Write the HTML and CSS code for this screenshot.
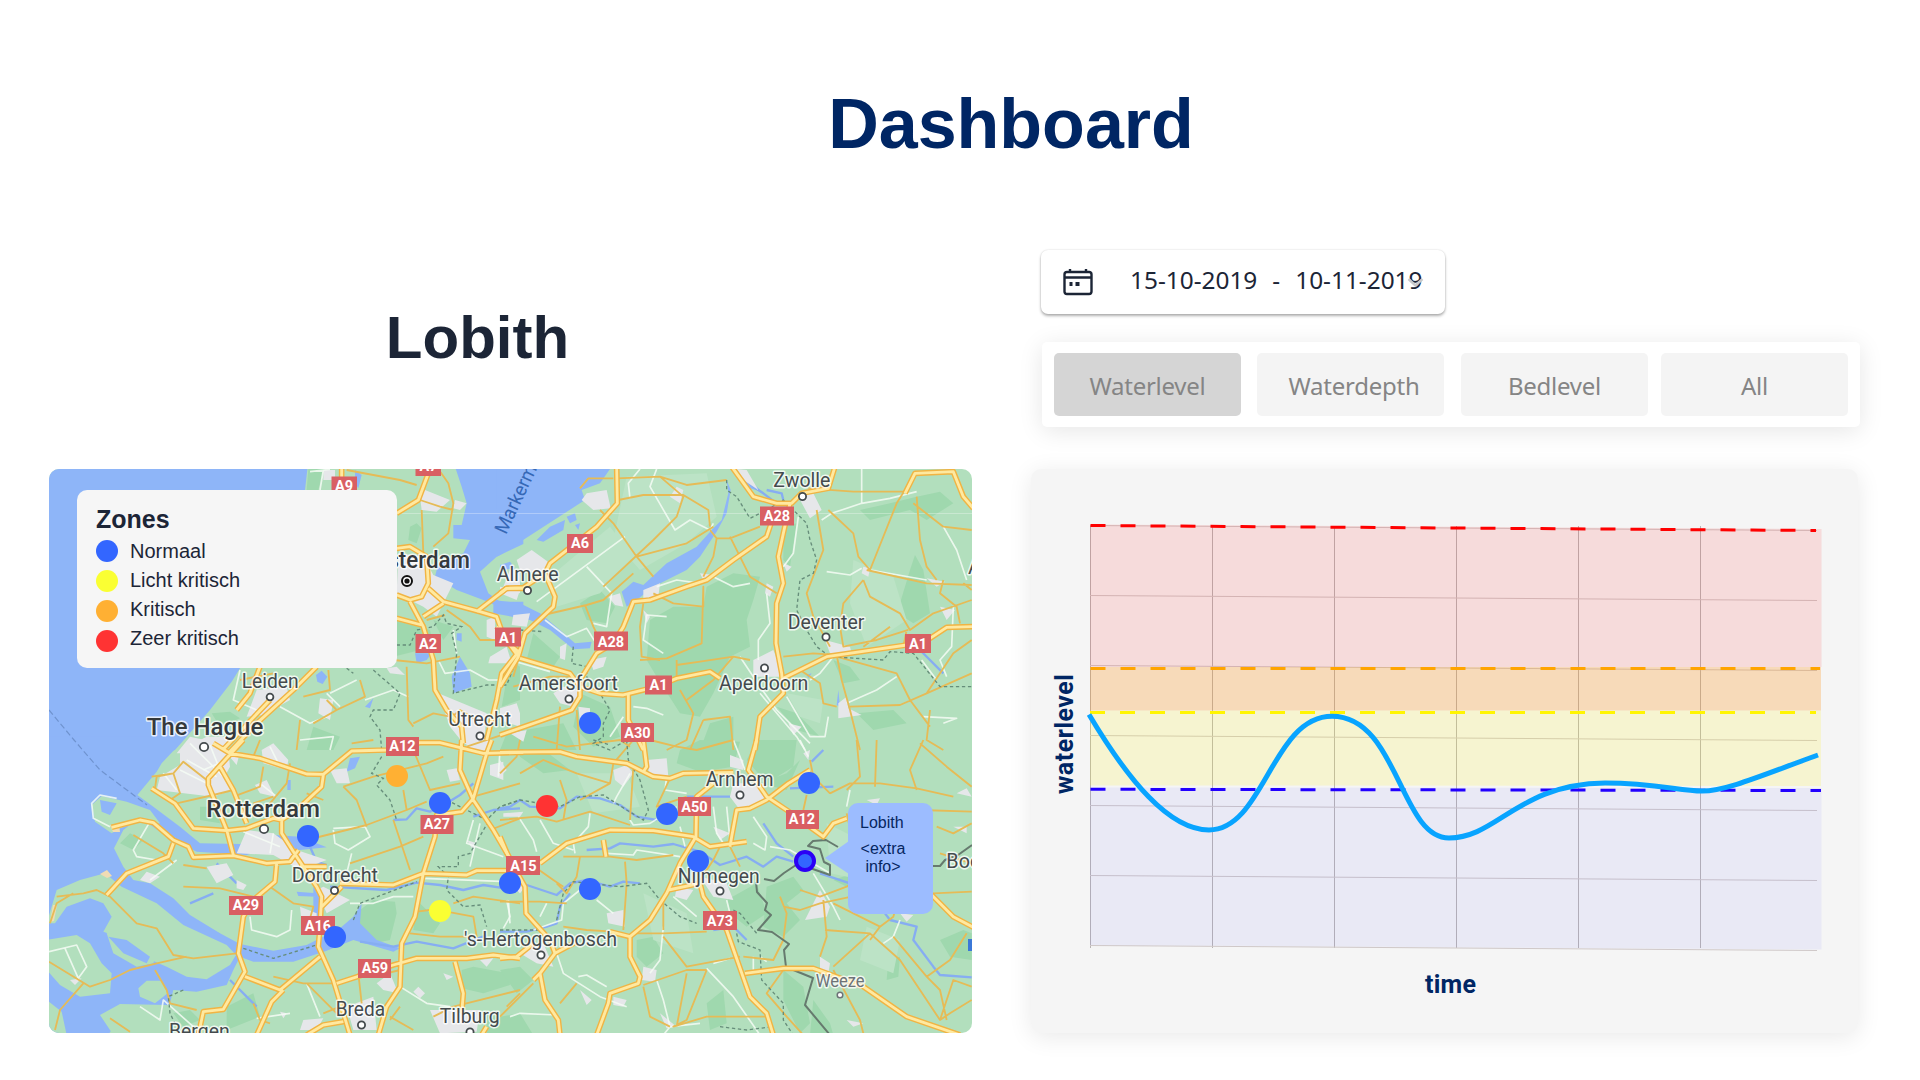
FILE: index.html
```html
<!DOCTYPE html>
<html lang="nl">
<head>
<meta charset="utf-8">
<title>Dashboard</title>
<link rel="stylesheet" href="styles.css">
</head>
<body>
<h1 class="title">Dashboard</h1>
<main class="columns">
  <section class="location">
    <h2 class="location-name">Lobith</h2>
    <div class="map">
      <svg class="map-canvas" viewBox="49 469 923 564" width="923" height="564">
        <defs>
          <g id="motorways">
            <g transform="translate(40 460) scale(.33333)">
              <path d="M905 20V60M1165 40L1135 120L1070 160M1070 265L1110 260L1160 290L1165 370L1145 410L1110 420L1070 405M1165 385L1210 425L1320 455L1370 470L1395 540L1440 580M1310 455L1400 385H1450M1110 425L1150 500L1180 600L1185 690L1220 750L1265 800L1270 850M1070 475L1145 495M1150 470L1210 430M1440 570L1385 640L1370 720L1340 840M830 620L760 690L650 790L565 880M660 620L630 700L590 750"/>
            </g>
            <g transform="translate(500 460) scale(.33333)">
              <path d="M350 20L352 130L290 200L150 310L135 340L165 410L160 440L75 520L55 590L0 680M0 400L20 385L70 383L135 340M695 20L760 110L830 130H875L905 100L985 85L1005 20M870 130L850 220L835 290L850 370L830 430L828 550L845 640L850 700L780 770L765 870M820 170L800 230L700 300L620 360L560 380L450 420L400 425L370 500L340 550L290 580L240 660V710L215 750L130 780L0 825M-10 500L55 590M60 595L210 640L240 680L300 700L370 705L470 680L530 655L630 635L660 655M850 655L980 590L1220 555L1290 535L1340 502L1420 500M385 700V780L430 870M1215 100L1245 40L1360 35L1390 110L1420 145"/>
            </g>
            <g transform="translate(40 740) scale(.33333)">
              <path d="M520 10L570 40L660 55L800 102L850 103L935 33L1040 30L1140 8H1200L1330 40L1450 37M610 0L505 115V135L560 270L580 345M540 80L580 150L620 250M215 262L300 240L340 248L400 300L445 320L460 352L580 347L680 370L750 365L775 330M335 145L405 190L460 265L560 272L620 265L700 235L725 240V280L770 350L830 440L845 470L840 560L835 620L880 720L930 885M850 105L845 140L770 210L725 240M710 370L705 425L640 480L610 530L595 640L615 695L550 808L490 815L475 885M615 710L720 750L840 650M730 750L695 785L650 885M780 380H860M900 430L1060 435L1150 400L1280 405L1310 392H1430M1355 0L1340 40L1300 175L1265 215L1190 225L1185 290L1150 400L1125 530L1085 610L1080 740L1040 800L1015 885M1265 0L1260 90L1300 180L1360 270L1430 390M890 730L1060 675L1130 655H1280L1360 645L1440 655M1245 665L1270 760L1265 820M1340 860L1325 885M400 310L385 350L260 400L200 465M910 845L850 855L800 885M845 500L905 440M550 28L690 -120"/>
            </g>
            <g transform="translate(500 740) scale(.33333)">
              <path d="M0 37L180 35L230 50L380 70L460 110L510 115L550 100L700 97M430 0L440 80L430 95M770 0L745 90L800 170L860 210L970 290L1000 250L1040 235M930 90L865 130L800 180L750 205L710 210L695 290L690 320M640 130L590 170L588 290L540 370L500 460L450 540L390 590V650L420 710L415 730L330 760L325 790L290 885M120 370L200 310L330 270L460 272L580 290L630 320L740 305M310 300L318 350M0 290L30 360L75 440L78 520L150 600L165 640L120 700L135 780L175 840L180 885M165 640L230 605M0 655L50 650L100 610M600 430L610 470L680 570L750 770L800 820L820 885M735 700L850 685H940L1090 740L1220 830L1380 885M1290 460L1360 530L1420 562M505 450L600 430M330 575L390 590M120 700L100 720"/>
            </g>
          </g>
        </defs>

        <rect class="land" x="49" y="469" width="923" height="564"/>

        <!-- woods -->
        <g class="wood" transform="translate(40 460) scale(.33333)">
          <path d="M1110 200L1130 190L1145 205L1130 250L1105 240ZM800 90L805 27L850 27L835 90ZM1060 480L1170 510L1180 560L1060 590ZM1410 600L1440 620V720L1385 740ZM820 800L900 830L880 870H800ZM1180 480L1240 500L1210 540ZM515 760L570 755L600 775L540 800Z"/>
        </g>
        <g class="wood" transform="translate(500 460) scale(.33333)">
          <path d="M620 380L700 340L780 350L760 420L740 480L750 560L690 590L640 700L600 770L540 760L470 650L440 600L450 480L520 440L610 440ZM1200 430L1230 330L1245 285L1270 330L1290 460L1240 490L1210 470ZM1080 150L1170 130L1250 110L1320 95L1360 130L1280 180L1230 150L1110 180ZM630 790L700 770V870H600ZM240 430L300 390L345 440L320 490L260 480ZM850 200L890 190L870 320L850 300ZM240 700L330 740L360 830L280 860L220 800ZM100 520L180 590L160 620L80 600ZM1070 760L1180 750L1220 790L1120 810ZM1000 600L1050 620L1080 660L1030 670ZM20 820L190 790L230 870H0ZM830 740L890 760L960 830L890 810Z"/>
        </g>
        <g class="wood" transform="translate(40 740) scale(.33333)">
          <path d="M960 510L1000 480L1065 485L1070 520L1050 600L1000 610L950 560ZM1265 690L1300 680L1405 700L1410 735L1330 760L1265 745ZM460 570L480 555L540 580L530 600ZM240 310L270 280L310 300L280 330ZM1340 820L1440 850V885H1340ZM400 820L450 810L480 840L430 860ZM480 200L530 200L540 250L480 240ZM1130 480L1200 550L1180 580L1120 570ZM560 800L640 760L660 830L560 870Z"/>
        </g>
        <g class="wood" transform="translate(500 740) scale(.33333)">
          <path d="M540 30L600 0L720 5L700 80L600 95L530 70ZM740 60L770 0H890L880 80L800 130ZM800 440L880 410L910 450L860 490L900 540L850 590L790 560ZM680 480L770 430L800 520L740 560L690 520ZM620 790L670 750L680 850L630 870ZM850 690L910 740L930 850L900 880L850 780ZM1320 600L1390 570L1415 580V660L1350 650ZM1165 660L1200 650L1195 710L1160 720ZM50 0L120 20L210 90L130 100L60 50ZM410 600L460 590L490 640L440 680L410 650ZM0 690L60 680L100 720L50 760ZM0 830L60 820L100 885H0ZM780 130L860 100L900 60L860 150ZM1000 420L1060 400L1100 430L1040 440ZM940 780L990 850L1000 885H930Z"/>
        </g>
        <g class="pale" transform="translate(500 460) scale(.33333)">
          <path d="M380 50L620 40L650 170L560 250L420 330L340 240ZM150 350L330 200L400 290L300 400L170 440ZM1060 300L1180 350L1220 480L1100 560L1050 430ZM860 700L970 720L960 790L900 770Z"/>
        </g>
        <g class="pale" transform="translate(500 740) scale(.33333)">
          <path d="M230 100L380 100L420 200L280 220ZM980 250L1080 300L1090 420L990 400ZM430 460L560 520L580 640L460 600ZM1100 560L1200 600L1180 700L1080 660Z"/>
        </g>

        <!-- sea, lakes and rivers -->
        <g class="water">
          <g transform="translate(40 460) scale(.33333)">
            <path d="M20 20H803L795 90V500L600 625L575 665L510 750L405 870L300 900H20ZM1245 20H1450V252L1370 290L1320 335L1345 400L1380 425H1450V470L1400 450L1330 420L1250 390L1185 350L1195 310L1270 280L1290 240L1240 235V195H1265L1280 130L1265 80ZM1235 650L1260 590L1290 640L1295 680L1240 700ZM1250 520L1265 520L1265 545L1250 540ZM828 645L845 632L862 650L848 672L832 665ZM1125 580H1175L1160 600L1130 610ZM975 740L1000 715L990 745ZM945 30L965 45L955 85L945 70Z"/>
          </g>
          <g transform="translate(500 460) scale(.33333)">
            <path d="M-10 20H335L300 70L245 90L255 120L0 285L-10 290ZM-20 420L60 430L120 460L180 510L225 550L275 545L270 565L220 568L150 510L90 480L-20 460ZM430 375L500 310L590 260L640 205L665 180L685 100L680 60L692 90L680 160L650 215L600 290L560 330L460 380L410 420L380 440L365 395L400 365ZM150 200L195 180L190 210L130 245L110 240ZM715 40L750 60L785 95L750 85ZM200 170L225 160L230 180L210 190ZM0 315L30 305L45 325L0 330ZM225 195L240 190L235 210ZM1015 690L1020 740L1010 735ZM920 645L935 640L925 655Z"/>
          </g>
          <g transform="translate(40 740) scale(.33333)">
            <path d="M20 -10H440L365 70L350 95L292 165L340 200L420 260L480 310L600 312L700 285L780 290L860 322L780 330L700 320L620 345L470 335L380 290L300 232L250 270L222 325L250 380L280 420L330 430L400 475L450 525L540 580L600 612L700 632L800 615L900 565L940 530L965 490L960 550L1010 600L1080 625L1060 635L940 600L860 632L760 665L640 665L600 650L580 690L560 735L470 755L400 750L390 790L330 830L230 850L200 890H20ZM930 55L960 50L945 85L920 95ZM820 440H838V540L820 530ZM770 455L830 460V470L775 468ZM742 120H752V150H742Z"/>
          </g>
        </g>
        <g class="river">
          <g transform="translate(40 740) scale(.33333)">
            <path d="M870 440L1040 450L1130 428L1200 435L1270 450L1330 435L1440 452M960 605L1060 620L1130 605L1240 625L1340 585M1060 240L1100 238L1130 205L1170 215L1220 190L1260 165L1300 130M1300 230L1360 210L1440 205M530 370L590 430M450 490L520 460M570 720L650 800M810 320L830 365L860 375"/>
          </g>
          <g transform="translate(500 740) scale(.33333)">
            <path d="M0 205L30 200L60 180L90 200L180 205L230 170L300 175L360 195L410 230L470 240M260 330L330 325L360 310L460 320L520 312L600 335L660 375L740 350L790 380L830 350L880 365M0 440L80 435L170 465L210 430L260 420L330 440L370 425L420 430M0 575L80 575L140 560L170 550L180 500L210 460M960 400L1050 430L1140 500L1170 540L1250 560L1240 600L1300 680L1320 705L1415 712M790 250L830 310L880 350M870 145L1000 140M935 65L970 30M640 570L700 560L740 600M560 170L690 170"/>
          </g>
          <g transform="translate(500 460) scale(.33333)">
            <path d="M700 27L760 80L790 100L830 130M800 90L845 100L850 120M1260 570L1330 640"/>
          </g>
        </g>

        <!-- delta islands -->
        <g class="land" transform="translate(40 740) scale(.33333)">
          <path d="M20 550L50 450L120 420L195 400L245 440L350 490L430 555L560 615L588 645L570 675L500 718L440 710L380 680L345 665L300 640L260 600L190 575L215 530L190 490L150 475L80 500L45 550ZM20 600L110 585L150 610L185 670L215 700L210 760L120 770L60 735L20 690ZM295 745L320 722L365 722L383 760L345 790L300 770ZM20 780L65 815L80 885H20ZM180 825L240 792L380 795L400 885H220ZM155 195L185 168L260 185L330 210L360 250L300 245L240 265L215 280L165 245ZM200 580H280L350 640L340 670L290 680L220 640Z"/>
        </g>
        <g class="water" transform="translate(40 740) scale(.33333)"><path d="M180 180L230 190L210 225L185 215ZM205 590L260 600L330 650L320 670L250 640Z"/></g>
        <path class="sand" d="M100 874L107 870L112 876L107 878ZM110 825L119 825L120 832L113 832ZM50 922L53 905L57 905L54 921Z"/>

        <!-- built-up areas -->
        <g class="urban">
          <g transform="translate(40 460) scale(.33333)">
            <path d="M1140 110L1155 90L1230 120L1190 155L1145 150ZM1245 120L1280 130L1260 150L1240 145ZM1075 280L1150 290L1180 345L1240 370L1190 470L1150 440L1070 400ZM850 30L885 30V60L850 60ZM840 715L880 720L870 780L835 760ZM1350 590L1400 560L1415 610L1345 610ZM650 690L740 680L750 720L670 765L620 770ZM450 830L540 850L540 880H410ZM1195 700L1340 760L1330 870L1270 850L1230 800ZM1380 780L1430 730L1440 760V800ZM1040 625L1070 620L1095 645L1050 640ZM1410 330H1440V400L1390 380Z"/>
            <path d="M830 210L890 190L900 260H840ZM1340 480L1365 470V540L1340 530Z"/>
          </g>
          <g transform="translate(500 460) scale(.33333)">
            <path d="M260 100L320 90L332 145L280 150L245 120ZM50 300L95 270L150 310L120 340L60 330ZM530 80L550 90L540 130L510 110ZM895 110L940 100L965 150L930 175ZM760 600L820 570L840 620L840 650L760 650ZM430 390L480 370L475 410L430 415ZM325 410L360 400L370 440L345 435ZM1280 355L1335 365L1310 380ZM1320 440L1365 450L1340 480ZM975 540L1050 560L1055 580L990 580ZM1015 730L1040 710L1045 745L1085 765L1015 775ZM160 700L190 680L240 690L220 740L180 730ZM235 740L270 745V800L240 790ZM600 340L640 345L610 360ZM800 370L820 380L810 410L795 400ZM270 600L320 590L310 620L280 630ZM30 820L80 810L70 845ZM430 450L450 470L440 490ZM850 310L875 320L860 335ZM1090 320L1110 325L1105 350L1085 340ZM865 790L905 800L880 825ZM180 560L200 550L195 600L180 595ZM0 380L60 390L50 420L0 400ZM40 465L90 460L80 500L35 495ZM710 27L740 30L775 90L730 60ZM0 745L50 730L40 770L0 790Z"/>
          </g>
          <g transform="translate(40 740) scale(.33333)">
            <path d="M420 30L500 -10H560L570 80L520 170L350 150L360 110L420 75ZM555 85L575 150L520 170L510 130ZM665 30L700 10L745 60L740 90L670 70ZM645 135L680 120L705 170L660 160ZM870 90L920 85L930 130L890 130ZM620 270L700 280L770 330L860 360L780 390L700 345L590 340ZM500 380L560 370L580 405L530 430ZM590 420L620 435L610 450L590 445ZM850 440L930 480L860 520L830 450ZM920 800L1000 770L1010 870H940ZM1010 730L1050 700L1075 760L1030 750ZM1120 755L1135 740L1155 760L1140 775ZM1170 810L1320 810L1310 875L1200 880ZM1220 90L1250 85L1260 120L1230 125ZM1350 75L1390 65V120L1350 105ZM300 420L320 395L360 410L330 430ZM1280 300L1310 310L1300 330ZM560 40L600 35L590 75ZM1280 -10H1350L1330 50L1280 20ZM1320 660L1360 655L1340 680ZM1210 700L1240 710L1220 720ZM790 840L850 835L830 870H780ZM720 815L740 820L730 835ZM90 720L125 715L105 735ZM780 500L830 520V550H785Z"/>
          </g>
          <g transform="translate(500 740) scale(.33333)">
            <path d="M340 90L380 75L400 100L370 140L345 120ZM440 60L500 55L505 110L450 115ZM700 130L790 130L800 180L720 210L690 170ZM640 260L690 280L660 300ZM600 410L680 430L700 480L640 470ZM530 440L580 450L560 480L525 470ZM320 520L370 510L375 560L325 550ZM60 640L130 610L160 680L110 670ZM430 680L470 690L465 725L425 720ZM340 770L380 780L370 800L340 795ZM960 450L990 500L980 530L915 540ZM960 650L990 670L985 700L960 685ZM1040 840L1090 850L1060 860ZM910 40L930 30L925 60ZM1370 160L1400 145L1415 170ZM1200 520L1240 525L1220 545ZM10 220L70 215L60 230H10ZM30 430L80 435L60 460ZM0 60L20 90L0 110ZM240 750L275 780L260 795ZM1360 260L1400 260V280ZM690 45L730 60V90L690 80ZM480 820L530 860L500 865ZM1100 180L1140 175L1130 195Z"/>
          </g>
        </g>

        <!-- local roads -->
        <g class="local">
          <g transform="translate(40 460) scale(.33333)">
            <path d="M810 35L870 28M850 30L840 90M600 630L580 720L650 750M870 700L950 660M860 700L900 740M975 720L1060 690L1105 710M1195 600L1215 640L1290 630L1345 660L1400 660M720 740L810 790L860 770M780 840L880 830L870 870M1240 510L1250 580"/>
          </g>
          <g transform="translate(500 460) scale(.33333)">
            <path d="M470 27L450 80L525 210L570 180L630 210L640 190M420 27L385 70L390 115M1085 27V130L995 160L965 180M1085 130L1170 115L1250 95M375 230L110 425M260 320L335 400L320 500L280 490M980 335L1050 345L1085 325M895 170L880 280L850 320M600 370L530 360L470 380M640 350L700 380L750 370M500 470L440 465L430 540L490 580M135 480L200 530L260 505L285 545M1330 200L1370 270L1400 360M720 590L780 680L830 750L880 800L930 850M780 700L890 830L915 870M860 710L930 830L975 830L985 770M1040 730L1130 690L1190 650M1265 600L1310 660M1270 770L1370 775L1330 790M400 740L440 745L490 765M1110 330L1280 360M1360 440L1355 560L1320 600L1340 650M800 400L810 490L775 540V600M930 660L960 640L1000 590M30 600L150 635M370 770L330 830"/>
          </g>
          <g transform="translate(40 740) scale(.33333)">
            <path d="M230 175L180 165L155 190L160 235L210 260M330 245L280 330L290 350L350 360M410 360L330 420M630 530L635 570L710 590L750 570L755 510M930 490L1000 490L1060 470L1120 470M880 270L885 310L925 330L990 290L975 260L880 265M935 340L920 400M1300 240L1280 310L1390 350M1320 250L1290 380M1400 480L1410 530L1390 565M27 635L110 615L140 680L115 715L75 625M300 800L360 840L370 780L460 860M1080 740L1160 790L1230 800M650 835L750 820M800 730L840 830M1150 415L1400 425M490 90L560 60M370 100L410 150M450 10L560 120M510 15L540 90"/>
            <path d="M440 60L530 110M420 90L500 130M660 130L710 170M610 275L720 320M700 280L690 340M690 20L720 80M1380 30L1375 110"/>
          </g>
          <g transform="translate(500 740) scale(.33333)">
            <path d="M390 100L350 170L340 190M500 110L495 150L560 160M270 220L265 260L220 310L225 340M55 230L100 300L110 335M120 240L160 310L220 330M390 240L400 255L450 250L530 200M540 260L555 320M700 0L720 50L735 90M900 0L925 50M1050 150L1040 200M640 200L650 280L670 310M680 200L690 300M760 230L800 290L795 330L760 310M810 320L870 330L990 400M320 340L400 345L410 330L540 350M290 480L340 520M240 450L190 490L185 540L100 570M140 490L120 530M490 560L480 660L450 700M170 640L190 700L300 770L380 800M235 710L260 705L320 740M470 720L490 780L510 860L490 885M620 685L700 770L780 885M680 480L690 520M30 830L60 820L170 825M520 470L590 530M940 400L1000 500L1020 540M510 860L600 850M1200 540L1180 590L1150 610M760 650V690M640 670L690 655M780 650L800 665M25 480L30 550"/>
          </g>
        </g>
        <path class="seam" d="M388 513.500H972"/>

        <!-- secondary roads -->
        <g class="secondary">
          <g transform="translate(40 460) scale(.33333)">
            <path d="M920 30L1080 60L1130 75M1195 27L1225 70L1240 130L1225 220L1180 260M1140 120L1200 140L1240 150M1145 150L1150 280M1220 450L1290 500L1320 540L1380 540M865 630L870 690L790 710M960 660L975 710L890 750L860 720M820 790L890 750M1100 620L1105 780L1120 800M1060 600L1160 610L1260 590M1120 790L1180 760L1230 770M780 780L770 870M1225 780L1260 750L1310 780M600 660L700 640M1280 860L1400 820M935 850L1000 840M1215 465L1160 480"/>
          </g>
          <g transform="translate(500 460) scale(.33333)">
            <path d="M240 85L265 55H340M350 55L480 50L560 75L680 60M355 120L430 105H550L625 150L630 200M480 50L550 110L530 170L460 240L310 380M300 150L340 190L410 290L460 350M410 290L560 250L640 200M130 465L260 435L310 420L400 340M255 435L280 500L310 560M690 230L750 350L830 400M650 235L640 290L610 350M780 200L690 235H650L630 210M460 400L520 430L610 440V380L605 550L500 595L420 600M530 615L600 605L700 590L750 600M430 430L420 500L425 590L480 600M950 150L970 270L920 400L940 470L990 560M985 150L1060 220L1075 290L1110 330L1190 130L1215 90M1100 330L1280 370L1415 375M1250 110L1260 240L1280 320L1310 360M1090 360L1030 430L1020 500L1030 560L1130 540L1225 510M1090 360L1110 410L1200 460L1230 510L1300 460L1415 420M1240 130L1330 200L1415 210M1330 360L1320 400L1370 440L1380 490M850 590L940 580L1010 585L1025 660L1050 750L1080 870M1010 590L1190 640L1230 720L1290 800M1050 740L1200 735L1280 700L1415 640M1280 700L1360 580L1415 540M900 630L960 670L970 730L1010 740M610 780L690 770L700 870M610 780L570 870M540 690L580 760L560 840L500 870M40 680L150 650L210 650M60 580L40 650M180 740L170 870M230 750L240 870M100 830L200 860L360 840L390 860M925 85L1060 95L1220 95M1220 510L1210 560M1290 750L1280 840L1330 870M1390 370L1415 390M530 600V650M1090 560L1170 500M700 590L640 660L560 720"/>
          </g>
          <g transform="translate(40 740) scale(.33333)">
            <path d="M335 110L400 100L420 160L390 180M345 145L350 110L400 100L430 65L500 120M410 190L520 165L580 150M670 80L660 140L580 170M750 70L740 130L690 190L640 230M850 180L800 160M660 0L640 50M910 140L1000 110L1040 100L1160 70L1210 50M910 140L950 180L980 260M800 300L860 285L980 255L1100 210L1160 185M1120 30L1170 150L1260 130M1060 240L1080 300L1110 390M930 370L1080 320L1150 290M430 375L500 385M430 440L540 445L640 470M690 440L760 490L820 500L800 570M50 470L130 460L170 450L210 470L290 550L350 565L400 645L460 655L590 640M30 550L50 490L100 460M27 665L150 740L210 720L270 690L350 670L440 650M130 730L60 810L45 870M345 690L380 750L390 790L470 810M1130 515L1170 510M1220 515L1300 530L1310 590L1200 590L1110 580M1240 490L1300 470L1440 490M700 710L790 730L880 730M800 730L860 790L900 830M640 790L660 840L690 850M955 700L965 790M1050 830L1120 870M280 285L370 340L400 370M1080 690L1000 710M1180 830L1240 800L1440 750M210 835L270 875M850 820L900 800M1400 800L1440 760M700 170L640 190M1100 210L1090 150M1300 170L1440 130M1350 270L1440 235M1050 840L1080 800"/>
          </g>
          <g transform="translate(500 740) scale(.33333)">
            <path d="M60 100L130 60L230 100L330 130L340 70L400 0M0 100L50 50L60 0M0 240L110 230L170 245L270 215L390 255M180 120L200 180L190 240M400 80L390 240M510 115L470 200L560 170M450 0L530 20L590 30L700 0M330 130L240 180M190 350L330 350L410 360L520 345M240 350L230 410L200 460L170 430M375 365L380 430L370 570M0 485L120 485L200 490M110 385L160 420L190 440M490 480V570M400 580H490L620 575M490 590L560 680L720 650M620 690L560 840L520 860L620 830L800 830M190 560L260 570L340 575M430 735L560 690L620 690M840 470L860 520L850 600L820 660L730 650M850 500L900 510L960 490L1100 460L1150 420M900 450L960 470L1040 440L1110 400M970 480L980 590L960 650M975 570L1110 580L1200 660L1320 840L1350 820L1415 780M1110 580L1000 680M1000 490L1140 560L1180 530L1200 460M1140 560L1110 600M990 160L1050 130L1140 130L1250 145L1360 170M990 160L940 110L930 60M920 165L910 210M1070 0L1080 110L1040 150M1130 0L1125 140M1270 0L1230 90L1250 150M1260 10L1340 80L1415 140M1260 210L1415 215M1310 260L1360 280L1415 250M1415 370L1320 340M1180 590L1280 710L1320 750L1340 840M1280 710L1350 660L1400 580M1040 220L1060 310M850 690L800 760L860 830L910 885M530 860L560 700M0 830L100 730M430 740L450 830L510 860M660 320L640 360L600 420M690 320L720 380M230 730L180 790M1000 690L1080 840L1090 880M1320 840L1360 720L1415 740M1300 460L1415 455"/>
          </g>
        </g>

        <!-- municipal and province boundaries -->
        <g class="boundary">
          <g transform="translate(40 460) scale(.33333)"><path d="M1070 555L1110 555L1130 510L1180 500L1210 465L1220 490L1265 500L1235 520L1250 580L1240 700L1340 675L1400 675L1440 575M1000 630L1080 700L1060 750L1000 750L990 770L1020 810L1025 870M920 625L940 640"/></g>
          <g transform="translate(500 460) scale(.33333)"><path d="M680 60V90L710 110L750 175L800 150L850 120L920 190L930 240L950 300L940 340L900 360L890 450L920 510L950 560L990 590L1150 600L1170 575L1240 580L1320 680H1415M60 510L130 515M15 660L60 570M220 560L215 610L260 620L260 650L300 700L330 750L310 790L310 830L280 850L330 870L380 840"/></g>
          <g transform="translate(40 740) scale(.33333)"><path d="M1025 50L995 100L1030 115L1010 135L1050 180L1070 240M1220 180L1340 240L1380 200L1440 180M1345 245L1290 340L1255 350V380H1195L1225 410L1220 450L1270 500L1320 495L1340 560M940 540L960 490L1130 425M610 625L700 655L830 615M430 750L385 770L390 820L405 850"/></g>
          <g transform="translate(500 740) scale(.33333)"><path d="M380 0L385 60L420 120L445 210L430 240L380 210L310 165L240 170L180 200L60 180L0 200M280 0L330 15M170 540L190 460L220 425L360 440L440 430L480 480L540 530L590 550M700 510L720 520L770 580M710 580L715 605L780 630L785 720L850 790L850 840L880 885M0 570L120 570M660 860L740 870L820 860"/></g>
        </g>
        <path class="sea-border" d="M49 710L74 740L100 770L147 805"/>
        <path class="border" d="M764 879L774 881L784 873L796 865L807 867L830 875V865L824 862L820 849L808 846L813 841L826 840L838 847M756 882L757 892L767 903L765 910L771 915L758 930L772 932L789 944L784 950L786 967L813 978L805 1005L830 1035M933 866H940L945 860L958 855L972 845"/>

        <use href="#motorways" class="mw-casing"/>
        <use href="#motorways" class="mw-core"/>

        <!-- place names -->
        <g class="places">
          <g transform="translate(40 460) scale(.33333)">
            <text class="city" x="1290" y="323" text-anchor="end" textLength="350" lengthAdjust="spacingAndGlyphs">Amsterdam</text>
            <text x="605" y="684" textLength="171" lengthAdjust="spacingAndGlyphs">Leiden</text>
            <text class="city" x="320" y="826" textLength="350" lengthAdjust="spacingAndGlyphs">The Hague</text>
            <text x="1225" y="799" textLength="188" lengthAdjust="spacingAndGlyphs">Utrecht</text>
            <text x="1370" y="364" textLength="186" lengthAdjust="spacingAndGlyphs">Almere</text>
            <text class="lake" transform="translate(1398 226) rotate(-65)" textLength="300" lengthAdjust="spacingAndGlyphs">Markermeer</text>
          </g>
          <g transform="translate(500 460) scale(.33333)">
            <text x="820" y="82" textLength="171" lengthAdjust="spacingAndGlyphs">Zwolle</text>
            <text x="863" y="507" textLength="230" lengthAdjust="spacingAndGlyphs">Deventer</text>
            <text x="56" y="690" textLength="298" lengthAdjust="spacingAndGlyphs">Amersfoort</text>
            <text x="657" y="691" textLength="268" lengthAdjust="spacingAndGlyphs">Apeldoorn</text>
            <text x="1404" y="342">Almelo</text>
          </g>
          <g transform="translate(40 740) scale(.33333)">
            <text class="city" x="499" y="231" textLength="341" lengthAdjust="spacingAndGlyphs">Rotterdam</text>
            <text x="755" y="427" textLength="259" lengthAdjust="spacingAndGlyphs">Dordrecht</text>
            <text x="887" y="829" textLength="148" lengthAdjust="spacingAndGlyphs">Breda</text>
            <text x="1199" y="850" textLength="180" lengthAdjust="spacingAndGlyphs">Tilburg</text>
            <text x="387" y="894" textLength="182" lengthAdjust="spacingAndGlyphs">Bergen</text>
            <text x="1272" y="619" textLength="459" lengthAdjust="spacingAndGlyphs">'s-Hertogenbosch</text>
          </g>
          <g transform="translate(500 740) scale(.33333)">
            <text x="617" y="138" textLength="204" lengthAdjust="spacingAndGlyphs">Arnhem</text>
            <text x="1339" y="385" textLength="202" lengthAdjust="spacingAndGlyphs">Bocholt</text>
            <text class="town" x="947" y="742" textLength="147" lengthAdjust="spacingAndGlyphs">Weeze</text>
          </g>
        </g>
        <g class="place-dots">
          <circle cx="270" cy="697" r="3.4"/><circle cx="204" cy="747" r="4.2"/><circle cx="480" cy="736" r="3.6"/>
          <circle cx="527.5" cy="590.5" r="3.6"/><circle cx="802.5" cy="496.5" r="3.6"/><circle cx="826" cy="637" r="3.6"/>
          <circle cx="569" cy="699" r="3.6"/><circle cx="764.5" cy="668" r="3.6"/><circle cx="264" cy="829" r="4.2"/>
          <circle cx="334.5" cy="890.5" r="3.6"/><circle cx="361.5" cy="1025" r="3.6"/><circle cx="470" cy="1032" r="3.6"/>
          <circle cx="541" cy="955" r="3.6"/><circle cx="740" cy="795" r="3.6"/><circle cx="720" cy="891" r="3.6"/>
          <circle class="small" cx="840" cy="995" r="2.8"/>
          <circle class="capital" cx="407" cy="581" r="5"/><circle class="capital-core" cx="407" cy="581" r="2.6"/>
        </g>
        <rect class="route" x="968" y="939" width="4" height="12"/>

        <!-- motorway shields -->
        <g class="shields">
          <path d="M331.5 476.500h25.500v19h-25.500zM415.500 457h25.500v19h-25.500zM415.500 634h25.500v19h-25.500zM495 627.500h26v19h-26zM567 534h26v19h-26zM760 506.500h34v19h-34zM594 631.500h34v19h-34zM645 675.500h27v19h-27zM905 634h26v19h-26zM621 723h33v19h-33zM386 737h33v19h-33zM420.500 815h33v19h-33zM229 896h34v19h-34zM301 916h34v19h-34zM358 959h33v19h-33zM506 856h34v19h-34zM678 797h33v19h-33zM786 810h33v19h-33zM703 911h34v19h-34z"/>
          <text x="344" y="490.500">A9</text><text x="428.500" y="471">A7</text><text x="428" y="648.500">A2</text><text x="508" y="642.500">A1</text>
          <text x="580" y="548">A6</text><text x="777" y="521">A28</text><text x="611" y="646.500">A28</text><text x="658.500" y="690">A1</text>
          <text x="918" y="648.500">A1</text><text x="637.500" y="737.500">A30</text><text x="402.500" y="751">A12</text><text x="437" y="829">A27</text>
          <text x="246" y="910">A29</text><text x="318" y="930.500">A16</text><text x="375" y="973">A59</text><text x="523.500" y="870.500">A15</text>
          <text x="694.500" y="811.500">A50</text><text x="802" y="824">A12</text><text x="720" y="925.500">A73</text>
        </g>

        <!-- measuring stations -->
        <g class="stations">
          <circle class="normal" cx="590" cy="723" r="11"/><circle class="normal" cx="440" cy="803" r="11"/>
          <circle class="normal" cx="308" cy="836" r="11"/><circle class="normal" cx="510" cy="883" r="11"/>
          <circle class="normal" cx="335" cy="937" r="11"/><circle class="normal" cx="667" cy="814" r="11"/>
          <circle class="normal" cx="809" cy="783" r="11"/><circle class="normal" cx="590" cy="889" r="11"/>
          <circle class="high" cx="397" cy="776" r="11"/><circle class="raised" cx="440" cy="911" r="11"/>
          <circle class="severe" cx="547" cy="806" r="11"/>
          <circle class="normal selected" cx="805" cy="861" r="9"/>
        </g>
        <g class="places"><text class="nijmegen" x="677.700" y="882.500" textLength="82" lengthAdjust="spacingAndGlyphs">Nijmegen</text></g>
        <circle class="normal" cx="698" cy="861" r="11"/>
        <path class="pointer" d="M825 858L849 841V874Z"/>
      </svg>

      <aside class="legend">
        <h3>Zones</h3>
        <div class="legend-body">
          <div class="legend-dots"><i class="dot dot-normal"></i><i class="dot dot-raised"></i><i class="dot dot-high"></i><i class="dot dot-severe"></i></div>
          <ul><li>Normaal</li><li>Licht kritisch</li><li>Kritisch</li><li>Zeer kritisch</li></ul>
        </div>
      </aside>
      <div class="popup"><p class="popup-name">Lobith</p><p class="popup-info">&lt;extra<br>info&gt;</p></div>
    </div>
  </section>

  <section class="levels">
    <button class="range">
      <svg width="30" height="28" viewBox="0 0 30 28">
        <rect x="1.500" y="4" width="27" height="22" rx="2.500" class="cal-line"/>
        <path d="M1.500 9.500H28.500M7 1V4M23 1V4" class="cal-line"/>
        <path d="M6.500 14H9.500V18H6.500ZM12.500 14H16.500V18H12.500Z" class="cal-day"/>
      </svg>
      <span class="range-text"><span>15-10-2019</span><span>-</span><span>10-11-2019</span></span>
      <svg class="chevron" width="17" height="11" viewBox="0 0 17 11"><path d="M1.500 2L8.500 8.500L15.500 2"/></svg>
    </button>
    <nav class="tabs">
      <button class="tab active">Waterlevel</button>
      <button class="tab depth">Waterdepth</button>
      <button class="tab bed">Bedlevel</button>
      <button class="tab">All</button>
    </nav>
    <div class="chart">
      <svg viewBox="1031 469 827 564" width="827" height="564">
        <path class="grid" d="M1090.500 526V948M1212.500 526V948M1334.500 526V948M1456.500 526V948M1578.500 526V948M1700.500 526V948"/>
        <path class="grid soft" d="M1090 525.500L1817 530.500M1090 595.500L1817 600.500M1090 665.500L1817 670.500M1090 735.500L1817 740.500M1090 805.500L1817 810.500M1090 875.500L1817 880.500M1090 945.500L1817 950.500"/>
        <path class="band red" d="M1090 524.500L1821.500 529V667H1090Z"/>
        <path class="band orange" d="M1090 667H1821V710.500H1090Z"/>
        <path class="band yellow" d="M1090 710.500H1821V786L1090 785.500Z"/>
        <path class="band blue" d="M1090 787.500L1821.500 788V949.500L1090 945Z"/>
        <g class="limits">
          <path stroke="#ff0000" d="M1090.500 525.500L1816 530.500"/>
          <path stroke="#ffa500" d="M1090.500 668.500H1820"/>
          <path stroke="#fff500" d="M1090 712.500H1816"/>
          <path stroke="#2200ff" d="M1090.500 789.300L1821 790.500"/>
        </g>
        <path class="curve" d="M1089 714.500C1128 780 1169 830 1209 830C1264 830 1272 716.300 1332 716.300C1398 716.300 1400 838 1449 838C1497 838 1518 784 1605 783C1655 783 1680 791 1702 791C1727 791 1765 774 1818 755"/>
        <text class="axis" x="1425" y="992.500" textLength="51">time</text>
        <text class="axis" transform="translate(1073 794) rotate(-90)" textLength="120">waterlevel</text>
      </svg>
    </div>
  </section>
</main>
</body>
</html>
```
FILE: styles.css
```css
* { box-sizing: border-box; }
body {
  margin: 0;
  width: 1920px;
  height: 1080px;
  overflow: hidden;
  display: flex;
  flex-direction: column;
  background: #fff;
  color: #1c2536;
  font-family: "Liberation Sans", sans-serif;
}
h1, h2, h3, p, ul { margin: 0; padding: 0; }
ul { list-style: none; }
button { border: 0; padding: 0; font: inherit; color: inherit; }

.title {
  margin-top: 84px;
  padding-left: 102px;
  text-align: center;
  font-size: 70px;
  line-height: 80px;
  color: #002664;
}
.columns { display: flex; gap: 59px; margin-top: 86px; padding-left: 49px; }

.location { width: 923px; padding-top: 53px; }
.location-name {
  padding-right: 66px;
  text-align: center;
  font-size: 60px;
  line-height: 70px;
}
.map { position: relative; height: 564px; margin-top: 96px; border-radius: 10px; overflow: hidden; }
.map-canvas { display: block; }

.land { fill: #b2dfbd; }
.wood { fill: #9fd8ae; }
.pale { fill: #bce3c6; }
.water { fill: #8eb5f8; }
.sand { fill: #f0dcb4; }
.urban { fill: #e6e7ea; }
.river { fill: none; stroke: #86adf2; stroke-width: 7; stroke-linejoin: round; }
.local { fill: none; stroke: #f4fbf5; stroke-opacity: .85; stroke-width: 5; stroke-linejoin: round; }
.seam { fill: none; stroke: #fff; stroke-opacity: .3; }
.secondary { fill: none; stroke: #e6bb56; stroke-width: 5.5; stroke-linejoin: round; }
.boundary { fill: none; stroke: #668d7a; stroke-width: 4; stroke-dasharray: 10 8; }
.sea-border { fill: none; stroke: #6f93cf; stroke-width: 1.200; stroke-dasharray: 6 3; }
.border { fill: none; stroke: #667a6e; stroke-width: 2; stroke-linejoin: round; }
.mw-casing { fill: none; stroke: #f1b443; stroke-width: 17; stroke-linejoin: round; }
.mw-core { fill: none; stroke: #ffe9a0; stroke-width: 8.5; stroke-linejoin: round; }
.route { fill: #3b78d8; }

.places text {
  font-family: Roboto, sans-serif;
  font-size: 61px;
  fill: #444a4d;
  stroke: #fff;
  stroke-opacity: .8;
  stroke-width: 9;
  stroke-linejoin: round;
  paint-order: stroke;
}
.places .city { font-size: 71px; font-weight: 500; fill: #35393c; }
.places .town { font-size: 53px; fill: #6d7377; }
.places .lake { font-size: 58px; fill: #3568b6; stroke: none; }
.places .nijmegen { font-size: 20.300px; stroke-width: 3; }
.place-dots circle { fill: #fff; stroke: #444a4d; stroke-width: 1.800; }
.place-dots .small { stroke: #6d7377; stroke-width: 1.500; }
.place-dots .capital { stroke: #111; stroke-width: 2; }
.place-dots .capital-core { fill: #111; stroke: none; }

.shields path { fill: #d95f63; }
.shields text {
  font: 700 14.500px Roboto, sans-serif;
  fill: #fff;
  text-anchor: middle;
}

.normal { fill: #3366ff; }
.raised { fill: #faff33; }
.high { fill: #ffb033; }
.severe { fill: #ff3333; }
.selected { stroke: #2b00f5; stroke-width: 4; }
.pointer { fill: #9cbcff; }

.legend {
  position: absolute;
  left: 28px;
  top: 21px;
  width: 320px;
  height: 178px;
  padding: 14px 19px;
  border-radius: 10px;
  background: #f6f6f6;
}
.legend h3 { font-size: 25px; line-height: 30px; }
.legend-body { display: flex; gap: 12px; padding-top: 6px; }
.legend-dots { display: flex; flex-direction: column; gap: 8px; }
.dot { width: 22px; height: 22px; border-radius: 50%; }
.dot-normal { background: #3366ff; }
.dot-raised { background: #faff33; }
.dot-high { background: #ffb033; }
.dot-severe { background: #ff3333; }
.legend li { font-size: 20px; line-height: 29px; margin-top: -3px; margin-bottom: 3px; }

.popup {
  position: absolute;
  left: 799px;
  top: 334px;
  width: 85px;
  height: 111px;
  padding: 11px 12px;
  border-radius: 10px;
  background: #9cbcff;
  color: #06265f;
  font-size: 16px;
  line-height: 18px;
}
.popup-info { margin: 8px 6px 0 -9px; text-align: center; }

.levels { width: 829px; font-family: "Noto Sans", sans-serif; }
.range {
  display: flex;
  align-items: center;
  width: 404px;
  height: 64px;
  margin-left: 10px;
  padding-left: 22px;
  border-radius: 7px;
  background: #fff;
  box-shadow: 0 2px 3px rgba(0, 0, 0, .3), 0 0 2px rgba(0, 0, 0, .15);
  font-size: 24.400px;
}
.range-text { display: flex; gap: 15px; margin: -6px 0 0 37px; white-space: nowrap; }
.cal-line { fill: none; stroke: #1c2536; stroke-width: 2.400; }
.cal-day { fill: #1c2536; }
.chevron { margin-left: -16px; flex: none; }
.chevron path { fill: none; stroke: #c9cacc; stroke-width: 2.500; }

.tabs {
  display: flex;
  width: 818px;
  height: 85px;
  margin: 28px 0 0 11px;
  padding: 11px 12px;
  border-radius: 5px;
  background: #fff;
  box-shadow: 0 4px 24px rgba(0, 0, 0, .1);
}
.tab {
  width: 187px;
  height: 63px;
  padding-top: 2px;
  border-radius: 5px;
  background: #f4f4f4;
  color: #858585;
  font-size: 24px;
  letter-spacing: -.25px;
}
.tab.active { background: #d5d5d5; }
.depth { margin-left: 16px; padding-left: 7px; }
.bed { margin: 0 13px 0 17px; }

.chart {
  width: 827px;
  height: 564px;
  margin-top: 42px;
  border-radius: 10px;
  background: #f5f5f5;
  box-shadow: 0 4px 24px rgba(0, 0, 0, .09);
}
.chart svg { display: block; }
.grid { stroke: #b9b5b5; stroke-width: 1; fill: none; }
.grid.soft { stroke: #cfc8c8; }
.red { fill: #ff0808; fill-opacity: .11; }
.orange { fill: #ff8700; fill-opacity: .245; }
.yellow { fill: #fff000; fill-opacity: .15; }
.blue { fill: #3a3aff; fill-opacity: .06; }
.limits path { fill: none; stroke-width: 3; stroke-dasharray: 15 15; }
.curve { fill: none; stroke: #08a4ff; stroke-width: 5; }
.axis { font: 700 25px Roboto, sans-serif; fill: #002664; }
```
